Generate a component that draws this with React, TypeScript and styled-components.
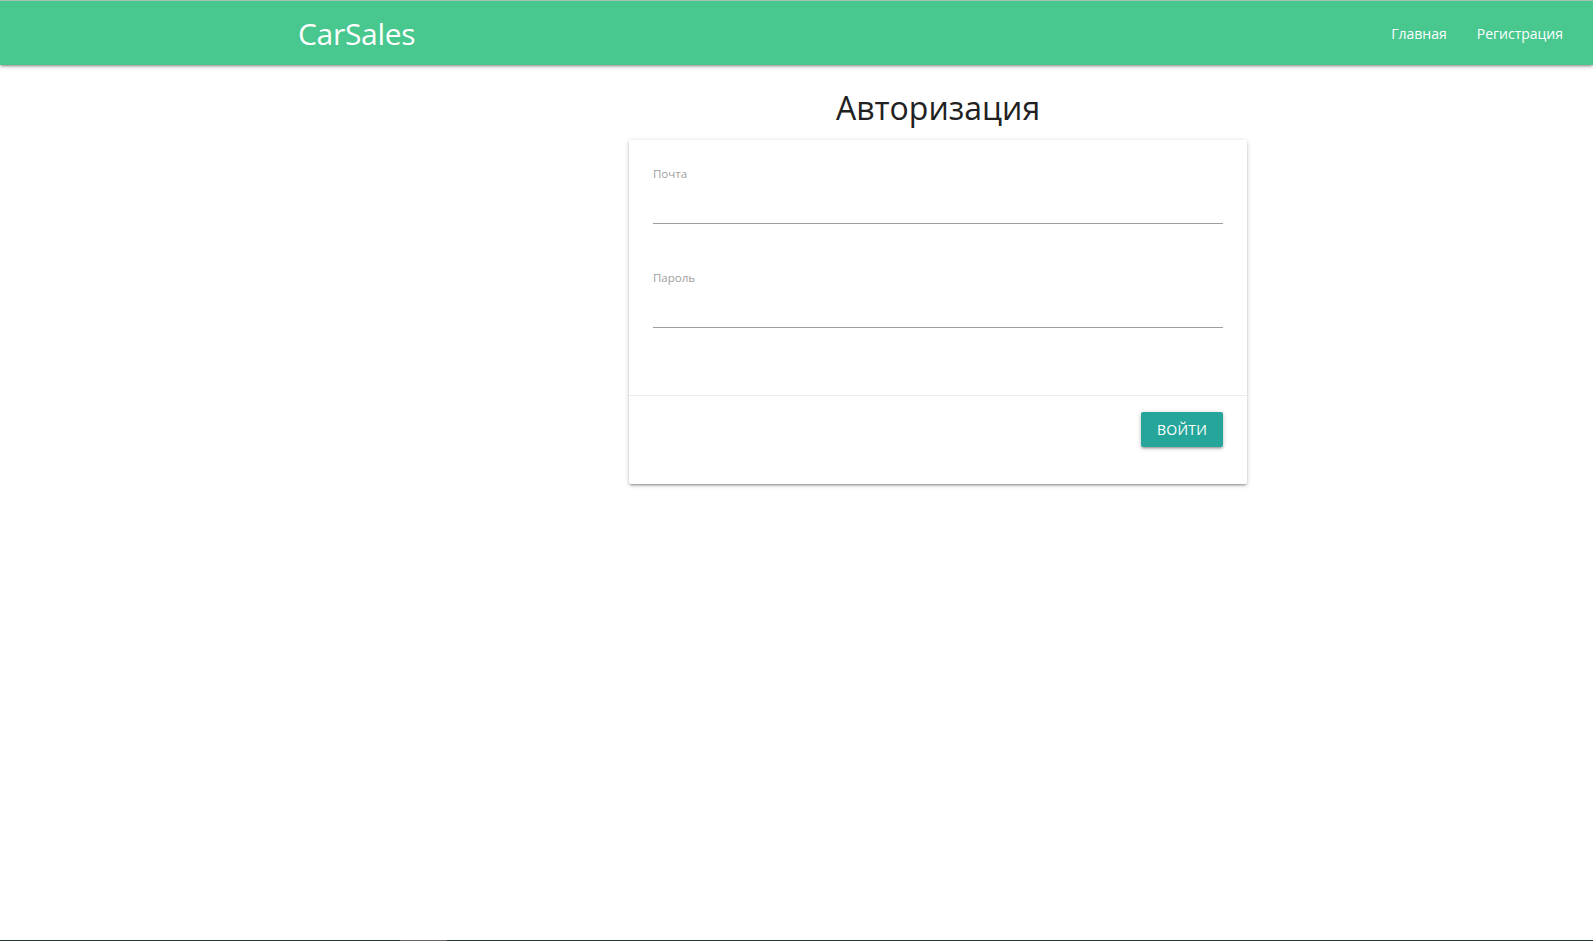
import React from "react";
import styled, { createGlobalStyle } from "styled-components";

const GlobalStyle = createGlobalStyle`
  html, body {
    margin: 0;
    padding: 0;
    background: #ffffff;
    font-family: "Open Sans", "Noto Sans", Arial, sans-serif;
    color: rgba(0, 0, 0, 0.87);
  }
  * { box-sizing: border-box; }
`;

const Page = styled.div`
  min-height: 941px;
  display: flex;
  flex-direction: column;
`;

const Navbar = styled.nav`
  height: 65px;
  border-top: 1px solid #a3c2b4;
  background: #48c78e;
  display: flex;
  align-items: center;
  justify-content: space-between;
  padding: 0 15px 0 298px;
  box-shadow: 0 2px 2px 0 rgba(0, 0, 0, 0.14), 0 3px 1px -2px rgba(0, 0, 0, 0.12),
    0 1px 5px 0 rgba(0, 0, 0, 0.2);
  position: relative;
  z-index: 2;
`;

const Brand = styled.a`
  color: #ffffff;
  font-size: 30px;
  letter-spacing: -0.3px;
  text-decoration: none;
  line-height: 64px;
  margin-top: 1px;
`;

const NavList = styled.ul`
  display: flex;
  list-style: none;
  margin: 0;
  padding: 2px 0 0;
`;

const NavLink = styled.a`
  display: block;
  color: #ffffff;
  font-size: 14px;
  line-height: 64px;
  padding: 0 15px;
  text-decoration: none;
`;

const Main = styled.main`
  display: grid;
  grid-template-columns: 629px 618px 1fr;
`;

const Column = styled.section`
  grid-column: 2;
  display: flex;
  flex-direction: column;
  align-items: stretch;
`;

const Title = styled.h1`
  margin: 26px 0 15px;
  font-size: 32px;
  font-weight: 400;
  line-height: 34px;
  text-align: center;
  color: #212121;
`;

const Card = styled.form`
  background: #ffffff;
  border-radius: 2px;
  box-shadow: 0 2px 2px 0 rgba(0, 0, 0, 0.14), 0 3px 1px -2px rgba(0, 0, 0, 0.12),
    0 1px 5px 0 rgba(0, 0, 0, 0.2);
  display: flex;
  flex-direction: column;
`;

const CardContent = styled.div`
  padding: 26px 24px 67px;
  display: flex;
  flex-direction: column;
  gap: 46px;
`;

const Field = styled.div`
  display: flex;
  flex-direction: column;
`;

const Label = styled.label`
  font-size: 11.5px;
  line-height: 16px;
  color: #9e9e9e;
`;

const Input = styled.input`
  height: 42px;
  border: none;
  border-bottom: 1px solid #9e9e9e;
  outline: none;
  background: transparent;
  font-family: inherit;
  font-size: 16px;
  padding: 0;
  width: 100%;
`;

const CardAction = styled.div`
  border-top: 1px solid rgba(160, 160, 160, 0.2);
  padding: 16px 24px 37px;
  display: flex;
  justify-content: flex-end;
`;

const Button = styled.button`
  height: 35px;
  padding: 0 16px;
  border: none;
  border-radius: 2px;
  background: #26a69a;
  color: #ffffff;
  font-family: inherit;
  font-size: 14px;
  letter-spacing: 0.2px;
  text-transform: uppercase;
  cursor: pointer;
  box-shadow: 0 2px 2px 0 rgba(0, 0, 0, 0.14), 0 3px 1px -2px rgba(0, 0, 0, 0.12),
    0 1px 5px 0 rgba(0, 0, 0, 0.2);
`;

const BottomEdge = styled.div`
  position: fixed;
  left: 0;
  right: 0;
  bottom: 0;
  height: 1px;
  background: #263238;
`;

const EdgeThumb = styled.div`
  position: absolute;
  left: 400px;
  width: 47px;
  top: 0;
  height: 1px;
  background: #5f686c;
`;

export default function App() {
  return (
    <>
      <GlobalStyle />
      <Page>
        <Navbar>
          <Brand href="#">CarSales</Brand>
          <NavList>
            <li>
              <NavLink href="#">Главная</NavLink>
            </li>
            <li>
              <NavLink href="#">Регистрация</NavLink>
            </li>
          </NavList>
        </Navbar>
        <Main>
          <Column>
            <Title>Авторизация</Title>
            <Card onSubmit={(e) => e.preventDefault()}>
              <CardContent>
                <Field>
                  <Label htmlFor="email">Почта</Label>
                  <Input id="email" type="email" />
                </Field>
                <Field>
                  <Label htmlFor="password">Пароль</Label>
                  <Input id="password" type="password" />
                </Field>
              </CardContent>
              <CardAction>
                <Button type="submit">Войти</Button>
              </CardAction>
            </Card>
          </Column>
        </Main>
      </Page>
      <BottomEdge>
        <EdgeThumb />
      </BottomEdge>
    </>
  );
}
